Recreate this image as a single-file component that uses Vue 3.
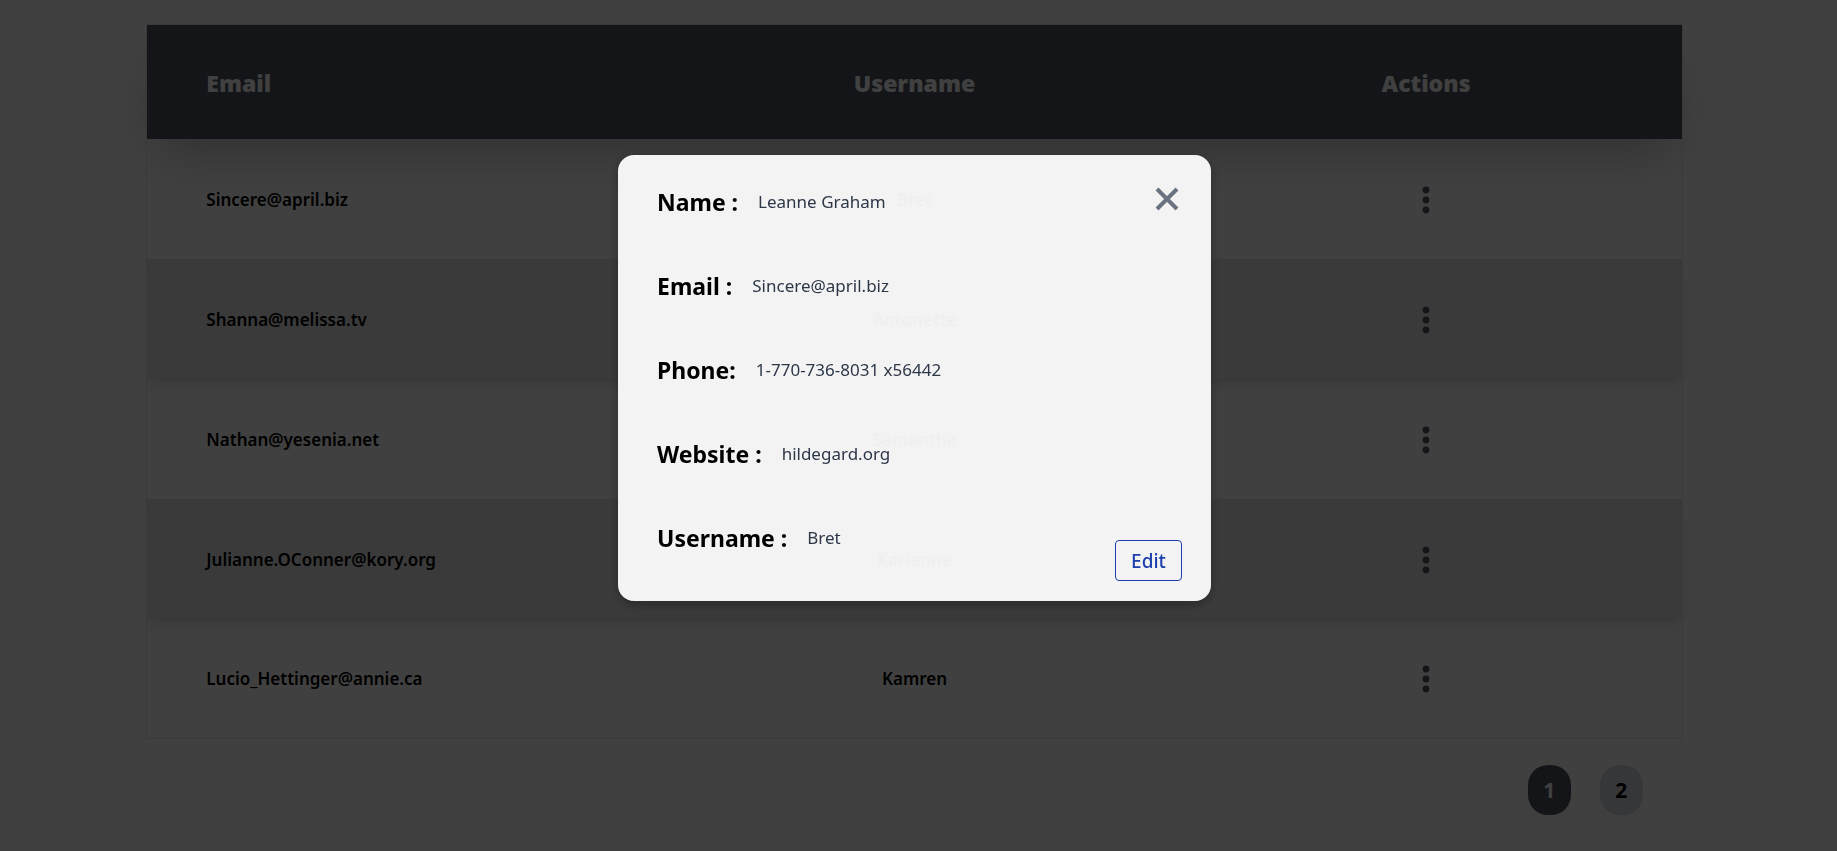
<script setup>
const users = [
  { email: 'Sincere@april.biz', username: 'Bret' },
  { email: 'Shanna@melissa.tv', username: 'Antonette' },
  { email: 'Nathan@yesenia.net', username: 'Samantha' },
  { email: 'Julianne.OConner@kory.org', username: 'Karianne' },
  { email: 'Lucio_Hettinger@annie.ca', username: 'Kamren' },
]
const details = [
  { label: 'Name :', value: 'Leanne Graham' },
  { label: 'Email :', value: 'Sincere@april.biz' },
  { label: 'Phone:', value: '1-770-736-8031 x56442' },
  { label: 'Website :', value: 'hildegard.org' },
  { label: 'Username :', value: 'Bret' },
]
</script>

<template>
  <div class="page">
    <main class="content">
      <table class="users">
        <thead>
          <tr>
            <th class="email" scope="col">Email</th>
            <th scope="col">Username</th>
            <th scope="col">Actions</th>
          </tr>
        </thead>
        <tbody>
          <tr v-for="u in users" :key="u.email">
            <td class="email">{{ u.email }}</td>
            <td>{{ u.username }}</td>
            <td>
              <button class="dots" type="button" :aria-label="`Actions for ${u.username}`">
                <svg viewBox="0 0 8 28" width="8" height="28" aria-hidden="true">
                  <circle cx="4" cy="4" r="3.4" /><circle cx="4" cy="14" r="3.4" /><circle cx="4" cy="24" r="3.4" />
                </svg>
              </button>
            </td>
          </tr>
        </tbody>
      </table>
      <nav class="pages" aria-label="Pagination">
        <button class="page-btn current" type="button" aria-current="page">1</button>
        <button class="page-btn" type="button">2</button>
      </nav>
    </main>

    <div class="overlay">
      <section class="modal" role="dialog" aria-modal="true" aria-label="User details">
        <button class="close" type="button" aria-label="Close">
          <svg viewBox="0 0 24 24" width="24" height="24" aria-hidden="true">
            <path d="M2 2 L22 22 M22 2 L2 22" />
          </svg>
        </button>
        <dl class="details">
          <div v-for="d in details" :key="d.label" class="detail">
            <dt>{{ d.label }}</dt>
            <dd>{{ d.value }}</dd>
          </div>
        </dl>
        <button class="edit" type="button">Edit</button>
      </section>
    </div>
  </div>
</template>

<style>
body {
  background: #fff;
}
</style>

<style scoped>
.page {
  min-height: 100vh;
  box-sizing: border-box;
  padding: 24px 8px 0 0;
  font-family: "Noto Sans", "Open Sans", sans-serif;
  color: #000;
}
button {
  font-family: inherit;
  cursor: pointer;
}
.content {
  width: 84%;
  margin: 0 auto;
}
.users {
  width: 100%;
  table-layout: fixed;
  border-collapse: collapse;
  border: 1px solid #e5e7eb;
}
thead tr {
  height: 114px;
  background: #50555f;
  color: #fff;
  box-shadow: 0 25px 50px -12px rgba(0, 0, 0, 0.25);
}
th {
  padding: 2px 0 0;
  font-size: 23px;
  font-weight: 900;
  line-height: 32px;
}
tbody tr {
  height: 120px;
}
tbody tr:nth-child(even) {
  background: #e8e8e8;
  box-shadow: 0 10px 15px -3px rgba(0, 0, 0, 0.1), 0 4px 6px -4px rgba(0, 0, 0, 0.1);
}
td {
  padding: 2px 0 0;
  text-align: center;
  font-size: 17px;
  font-weight: 600;
  line-height: 24px;
}
.email {
  padding-left: 59px;
  text-align: left;
}
.dots {
  display: block;
  margin: 0 auto;
  padding: 0;
  border: 0;
  background: none;
}
.dots svg {
  display: block;
  fill: #50555f;
}
.pages {
  display: flex;
  justify-content: flex-end;
  gap: 29px;
  margin-top: 26px;
  padding-right: 40px;
}
.page-btn {
  width: 43px;
  height: 50px;
  padding: 0;
  border: 0;
  border-radius: 20px;
  background: #d5d9e0;
  color: #000;
  font-size: 21px;
  font-weight: 700;
  box-shadow: 0 20px 25px -5px rgba(0, 0, 0, 0.04);
}
.page-btn.current {
  background: #50555f;
  color: #fff;
}
.overlay {
  position: fixed;
  inset: 0;
  display: flex;
  align-items: flex-start;
  justify-content: center;
  box-sizing: border-box;
  padding: 155px 8px 0 0;
  background: rgba(0, 0, 0, 0.75);
}
.modal {
  position: relative;
  box-sizing: border-box;
  width: 593px;
  padding: 31px 39px 47px;
  border-radius: 16px;
  background: rgba(255, 255, 255, 0.937);
  box-shadow: 0 4px 12px rgba(0, 0, 0, 0.3);
}
.details {
  display: grid;
  gap: 52px;
  margin: 0;
}
.detail {
  display: flex;
  align-items: center;
  gap: 20px;
}
dt {
  font-size: 23px;
  font-weight: 700;
  line-height: 32px;
}
dd {
  margin: 0;
  color: #2d3748;
  font-size: 17px;
  font-weight: 400;
  line-height: 32px;
}
.close {
  position: absolute;
  top: 32px;
  right: 32px;
  padding: 0;
  border: 0;
  background: none;
}
.close svg {
  display: block;
  fill: none;
  stroke: #6b7280;
  stroke-width: 4;
}
.edit {
  position: absolute;
  right: 29px;
  bottom: 20px;
  width: 67px;
  height: 41px;
  padding: 0;
  border: 1px solid #1e40af;
  border-radius: 4px;
  background: none;
  color: #1e40af;
  font-size: 19px;
  font-weight: 500;
}
</style>
